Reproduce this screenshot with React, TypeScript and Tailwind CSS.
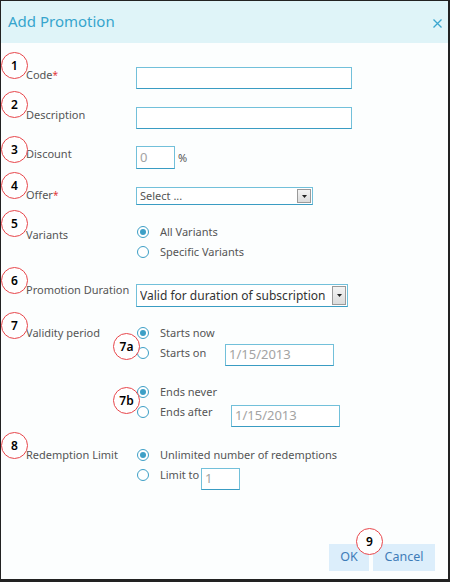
import type { ReactNode } from 'react'

const font = { fontFamily: '"Segoe UI", "Noto Sans", "Open Sans", sans-serif' }

function Marker({ n, className }: { n: string; className: string }) {
  return (
    <span
      className={`absolute w-[27px] h-[27px] rounded-full border-[1.5px] border-[#e8464b] bg-white flex items-center justify-center text-[12px] font-semibold text-black leading-none z-10 ${className}`}
    >
      {n}
    </span>
  )
}

function Radio({ checked }: { checked?: boolean }) {
  return (
    <span className="w-[12px] h-[12px] rounded-full border-[1.5px] border-[#3d9fc6] bg-white flex items-center justify-center shrink-0">
      {checked && <span className="w-[6px] h-[6px] rounded-full bg-[#3d9fc6]" />}
    </span>
  )
}

// labelWidth fixes where a trailing input starts, as in the reference
function RadioLine({ checked, label, labelWidth, children }: {
  checked?: boolean
  label: string
  labelWidth?: string
  children?: ReactNode
}) {
  return (
    <div className="flex items-start">
      <div className="h-[20px] flex items-center">
        <Radio checked={checked} />
        <span className={`ml-[11px] whitespace-nowrap text-[11px] text-[#555] ${labelWidth ?? ''}`}>{label}</span>
      </div>
      {children}
    </div>
  )
}

function TextBox({ className, value }: { className: string; value?: string }) {
  return (
    <div
      className={`border border-[#72c0da] border-b-[#3a9cc3] bg-white flex items-center px-[3px] text-[13px] text-[#a3a3a3] ${className}`}
    >
      {value}
    </div>
  )
}

function Select({ className, value, textClass }: { className: string; value: string; textClass: string }) {
  return (
    <div className={`border border-[#72c0da] border-b-[#3a9cc3] bg-white flex items-center pl-[3px] pr-[1px] ${className}`}>
      <span className={`flex-1 whitespace-nowrap overflow-hidden ${textClass}`}>{value}</span>
      <span className="w-[14px] self-stretch my-[1px] border border-[#9a9a9a] bg-gradient-to-b from-[#f4f4f4] to-[#dcdcdc] flex items-center justify-center">
        <svg width="5" height="3" viewBox="0 0 5 3">
          <path d="M0 0h5L2.5 3z" fill="#222" />
        </svg>
      </span>
    </div>
  )
}

function Row({ label, required, marker, markerTop, labelClass, className, children }: {
  label: string
  required?: boolean
  marker: string
  markerTop: string
  labelClass?: string
  className: string
  children: ReactNode
}) {
  return (
    <div className={`relative flex items-start ${className}`}>
      <Marker n={marker} className={`left-[-25px] ${markerTop}`} />
      <div className={`w-[110px] shrink-0 whitespace-nowrap text-[11px] leading-[16px] text-[#555] ${labelClass ?? ''}`}>
        {label}
        {required && <span className="text-[#e23a3a] text-[10px] align-top">*</span>}
      </div>
      {children}
    </div>
  )
}

export default function App() {
  return (
    <div
      style={font}
      className="w-[450px] h-[582px] bg-[#fcfefe] border-t border-l border-r-2 border-b-[3px] border-[#222] flex flex-col"
    >
      <div className="h-[42px] shrink-0 bg-[#dff4f8] flex items-center justify-between pl-[7px] pr-[6px]">
        <h1 className="text-[15px] text-[#36a5cd] pb-[1px]">Add Promotion</h1>
        <svg width="9" height="9" viewBox="0 0 9 9" className="mt-[2px]">
          <path d="M0.5 0.5l8 8M8.5 0.5l-8 8" stroke="#3aa6cf" strokeWidth="1.3" />
        </svg>
      </div>

      <div className="pl-[25px] flex flex-col">
        <Row label="Code" required marker="1" markerTop="top-[-15px]" className="mt-[24px]">
          <TextBox className="w-[216px] h-[22px]" />
        </Row>

        <Row label="Description" marker="2" markerTop="top-[-16px]" className="mt-[18px]">
          <TextBox className="w-[216px] h-[22px]" />
        </Row>

        <Row label="Discount" marker="3" markerTop="top-[-10px]" className="mt-[17px]">
          <TextBox className="w-[39px] h-[23px] text-[#777]" value="0" />
          <span className="ml-[3px] mt-[4px] text-[11px] text-[#555]">%</span>
        </Row>

        <Row label="Offer" required marker="4" markerTop="top-[-15px]" className="mt-[18px]">
          <Select className="w-[177px] h-[18px]" value="Select ..." textClass="text-[11px] text-[#555]" />
        </Row>

        <Row label="Variants" marker="5" markerTop="top-[-12px]" labelClass="mt-[5px]" className="mt-[17px]">
          <div className="flex flex-col pl-[1px]">
            <RadioLine checked label="All Variants" />
            <RadioLine label="Specific Variants" />
          </div>
        </Row>

        <Row label="Promotion Duration" marker="6" markerTop="top-[-17px]" labelClass="mt-[-2px]" className="mt-[22px]">
          <Select
            className="w-[212px] h-[23px]"
            value="Valid for duration of subscription"
            textClass="text-[12px] text-[#333]"
          />
        </Row>

        <Row label="Validity period" marker="7" markerTop="top-[-11px]" labelClass="mt-[2px]" className="mt-[16px]">
          <div className="flex flex-col pl-[1px]">
            <div className="relative flex flex-col">
              <Marker n="7a" className="left-[-24px] top-[10px]" />
              <RadioLine checked label="Starts now" />
              <RadioLine label="Starts on" labelWidth="w-[65px]">
                <TextBox className="mt-[1px] w-[109px] h-[22px]" value="1/15/2013" />
              </RadioLine>
            </div>
            <div className="relative flex flex-col mt-[16px]">
              <Marker n="7b" className="left-[-24px] top-[5px]" />
              <RadioLine checked label="Ends never" />
              <RadioLine label="Ends after" labelWidth="w-[71px]">
                <TextBox className="mt-[3px] w-[109px] h-[22px]" value="1/15/2013" />
              </RadioLine>
            </div>
          </div>
        </Row>

        <Row label="Redemption Limit" marker="8" markerTop="top-[-13px]" labelClass="mt-[2px]" className="mt-[18px]">
          <div className="flex flex-col pl-[1px]">
            <RadioLine checked label="Unlimited number of redemptions" />
            <RadioLine label="Limit to" labelWidth="w-[41px]">
              <TextBox className="mt-[3px] w-[39px] h-[22px]" value="1" />
            </RadioLine>
          </div>
        </Row>
      </div>

      <div className="flex-1" />

      <div className="flex justify-end gap-[4px] pr-[13px] pb-[8px]">
        <button className="relative w-[40px] h-[27px] bg-[#dceefb] text-[12.5px] text-[#3f7cb8]">
          <Marker n="9" className="left-[27px] top-[-16px]" />
          OK
        </button>
        <button className="w-[62px] h-[27px] bg-[#dceefb] text-[12.5px] text-[#3f7cb8]">Cancel</button>
      </div>
    </div>
  )
}
